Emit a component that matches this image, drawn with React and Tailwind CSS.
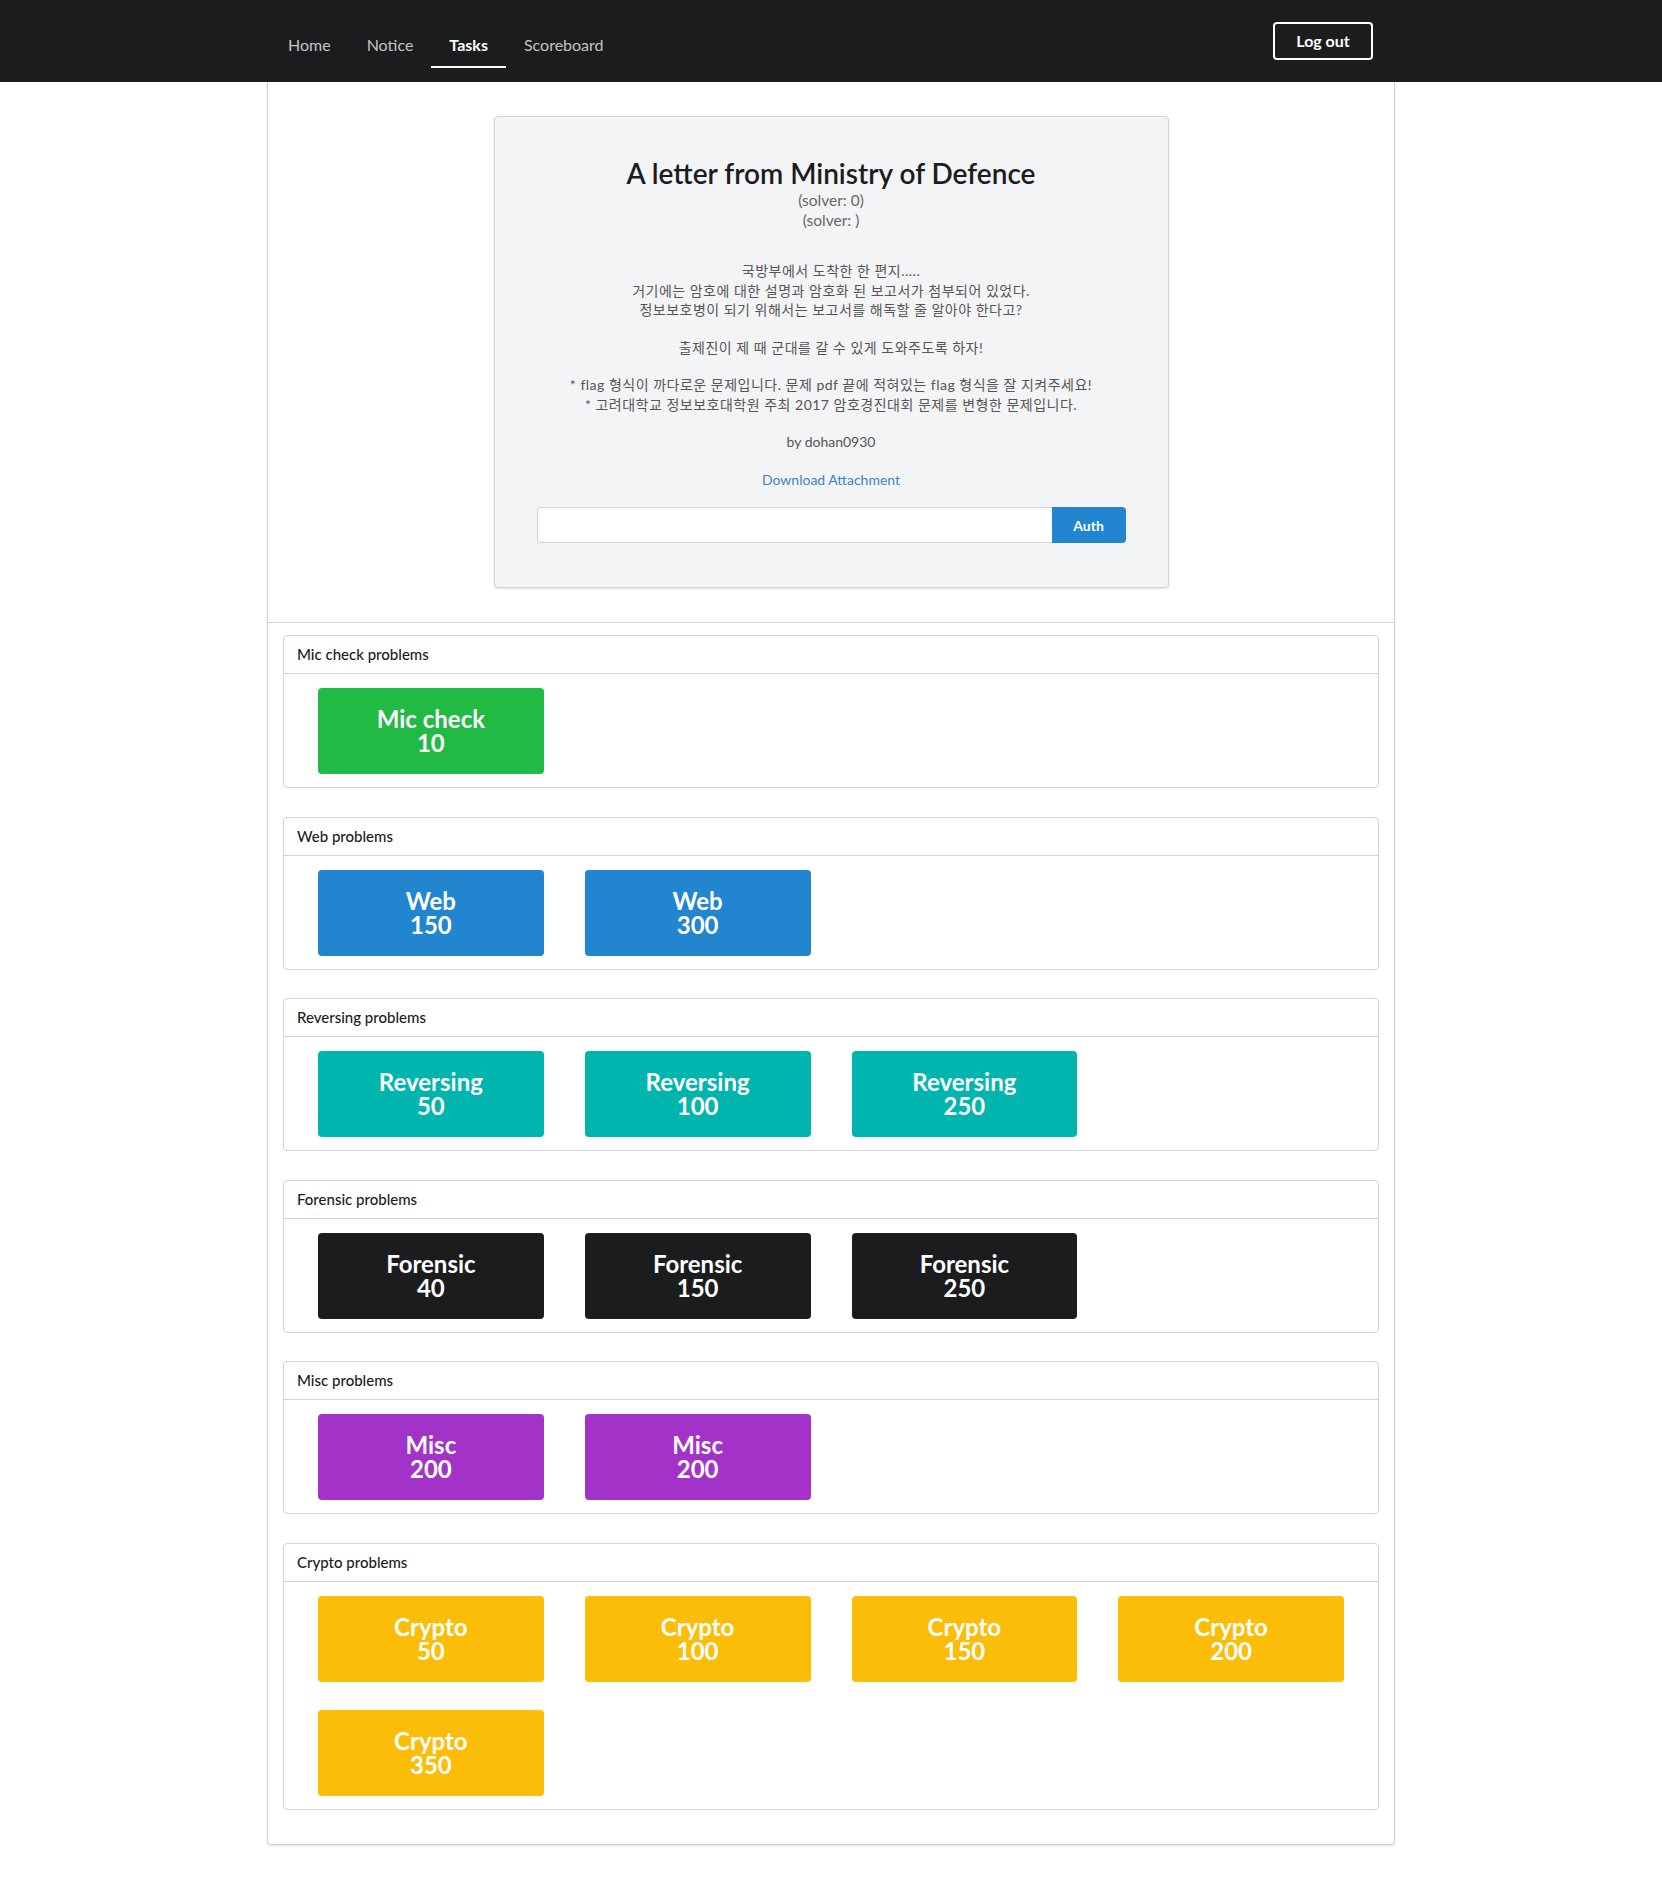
import React from "react";

const sections = [
  { title: "Mic check problems", color: "bg-[#21ba45]", tasks: [["Mic check", 10]] },
  { title: "Web problems", color: "bg-[#2185d0]", tasks: [["Web", 150], ["Web", 300]] },
  {
    title: "Reversing problems",
    color: "bg-[#00b5ad]",
    tasks: [["Reversing", 50], ["Reversing", 100], ["Reversing", 250]],
  },
  {
    title: "Forensic problems",
    color: "bg-[#1b1c1d]",
    tasks: [["Forensic", 40], ["Forensic", 150], ["Forensic", 250]],
  },
  { title: "Misc problems", color: "bg-[#a333c8]", tasks: [["Misc", 200], ["Misc", 200]] },
  {
    title: "Crypto problems",
    color: "bg-[#fbbd08]",
    tasks: [["Crypto", 50], ["Crypto", 100], ["Crypto", 150], ["Crypto", 200], ["Crypto", 350]],
  },
];

const navItems = ["Home", "Notice", "Tasks", "Scoreboard"];

function NavBar() {
  return (
    <div className="h-[82px] bg-[#1b1c1d]">
      <div className="w-[1128px] mx-auto h-full flex items-start justify-between pl-[3px] pr-[22px]">
        <div className="flex pt-[23px]">
          {navItems.map((item) => (
            <div
              key={item}
              className={`h-[45px] px-[18px] flex items-center text-[16px] border-b-2 ${
                item === "Tasks"
                  ? "border-white text-white font-bold"
                  : "border-transparent text-[#c4c4c4]"
              }`}
            >
              {item}
            </div>
          ))}
        </div>
        <div className="mt-[22px] h-[38px] w-[100px] border-2 border-white rounded-[4px] flex items-center justify-center text-white font-bold text-[16px]">
          Log out
        </div>
      </div>
    </div>
  );
}

function TaskCard() {
  return (
    <div className="w-[675px] mx-auto bg-[#f3f4f5] border border-[#d4d4d5] rounded-[4px] shadow-[0_1px_2px_0_rgba(34,36,38,0.15)] px-[42px] pt-[39px] pb-[44px] text-center">
      <h1 className="text-[28px] leading-[35px] font-semibold text-[#1b1c1d]">
        A letter from Ministry of Defence
      </h1>
      <div className="text-[15.5px] leading-[19.5px] text-[#666]">
        <div>(solver: 0)</div>
        <div>(solver: )</div>
      </div>
      <div className="mt-[31px] text-[14px] leading-[19.5px] text-[#555]">
        <div className="tracking-[0.5px]">국방부에서 도착한 한 편지.....</div>
        <div className="tracking-[0.5px]">거기에는 암호에 대한 설명과 암호화 된 보고서가 첨부되어 있었다.</div>
        <div className="tracking-[0.5px]">정보보호병이 되기 위해서는 보고서를 해독할 줄 알아야 한다고?</div>
        <div className="mt-[18px] tracking-[0.5px]">출제진이 제 때 군대를 갈 수 있게 도와주도록 하자!</div>
        <div className="mt-[18px] tracking-[0.5px]">
          * flag 형식이 까다로운 문제입니다. 문제 pdf 끝에 적혀있는 flag 형식을 잘 지켜주세요!
        </div>
        <div className="tracking-[0.5px]">* 고려대학교 정보보호대학원 주최 2017 암호경진대회 문제를 변형한 문제입니다.</div>
        <div className="mt-[18px]">by dohan0930</div>
        <div className="mt-[18px] text-[#4183c4]">Download Attachment</div>
      </div>
      <div className="mt-[18px] flex h-[36px]">
        <div className="flex-1 bg-white border border-[#d4d4d5] border-r-0 rounded-l-[4px]" />
        <div className="w-[74px] bg-[#2185d0] rounded-r-[4px] flex items-center justify-center text-white font-bold text-[14px]">
          Auth
        </div>
      </div>
    </div>
  );
}

function Section({ section }) {
  return (
    <div className="border border-[#d4d4d5] rounded-[4px] bg-white">
      <div className="h-[38px] px-[13px] flex items-center border-b border-[#d4d4d5] text-[15px] font-medium text-[#1b1c1d]">
        {section.title}
      </div>
      <div className="px-[34px] pt-[14px] pb-[13px] grid grid-cols-4 gap-x-[41px] gap-y-[28px]">
        {section.tasks.map(([name, pts], i) => (
          <div
            key={i}
            className={`h-[86px] rounded-[4px] ${section.color} flex flex-col items-center justify-center text-white font-bold text-[24px] leading-[24px]`}
          >
            <span>{name}</span>
            <span>{pts}</span>
          </div>
        ))}
      </div>
    </div>
  );
}

export default function App() {
  return (
    <div className="min-h-[1897px] bg-white font-['Lato','Noto_Sans_CJK_KR',sans-serif]">
      <NavBar />
      <div className="w-[1128px] mx-auto bg-white border border-t-0 border-[#d4d4d5] rounded-b-[4px] shadow-[0_1px_2px_0_rgba(34,36,38,0.15)]">
        <div className="pt-[34px] pb-[34px] border-b border-[#d4d4d5]">
          <TaskCard />
        </div>
        <div className="px-[15px] pt-[12px] pb-[34px] flex flex-col gap-[28.5px]">
          {sections.map((s) => (
            <Section key={s.title} section={s} />
          ))}
        </div>
      </div>
    </div>
  );
}
